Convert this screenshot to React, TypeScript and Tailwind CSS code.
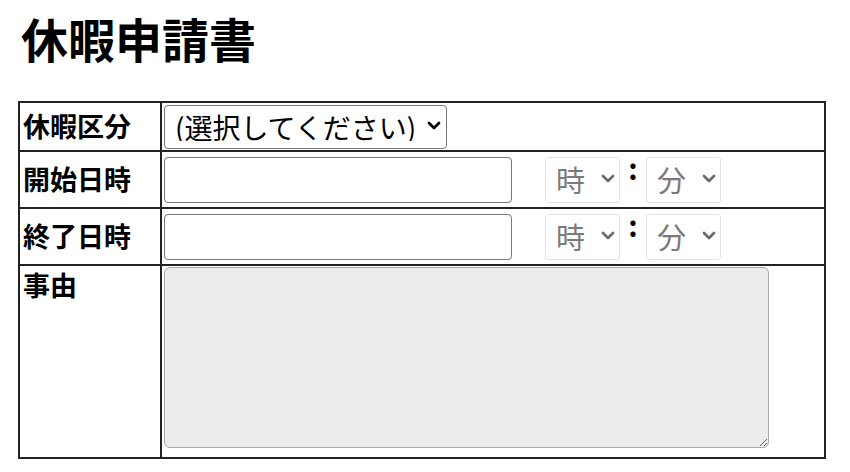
// 休暇申請書 — a plain application form laid out as a bordered table.
const JP = "font-['Noto_Sans_CJK_JP','Noto_Sans',sans-serif]"

function Caret({ className }: { className: string }) {
  return (
    <svg
      width="14"
      height="9"
      viewBox="0 0 14 9"
      fill="none"
      stroke="currentColor"
      strokeWidth="2.7"
      strokeLinecap="round"
      strokeLinejoin="round"
      className={`pointer-events-none absolute ${className}`}
    >
      <polyline points="2,2 7,7 12,2" />
    </svg>
  )
}

function TimeSelect({ label }: { label: string }) {
  return (
    <div className="relative h-[46px] w-[75px]">
      <select
        disabled
        className={`h-full w-full appearance-none rounded-[3px] border border-[#e3e3e3] bg-white pl-[10px] text-[29px] leading-none text-[#7a7a7a] ${JP}`}
      >
        <option>{label}</option>
      </select>
      <Caret className="right-[5px] top-[17px] text-[#6a6a6a]" />
    </div>
  )
}

function DateTimeRow({ label }: { label: string }) {
  return (
    <tr className="h-[57px]">
      <th className="border-2 border-[#222] px-[3px] text-left align-middle text-[27px] font-bold">
        {label}
      </th>
      <td className="border-2 border-[#222] px-[2px] align-middle">
        <div className="flex items-start">
          <input
            type="text"
            className="h-[46px] w-[348px] rounded-[4px] border border-[#767676] bg-white"
          />
          <div className="ml-[33px] flex items-start">
            <TimeSelect label="時" />
            <span className="-mt-[4px] w-[26px] text-center text-[29px] font-bold leading-none">:</span>
            <TimeSelect label="分" />
          </div>
        </div>
      </td>
    </tr>
  )
}

export default function App() {
  return (
    <div className={`min-h-[472px] bg-white px-[18px] pt-[14px] text-black ${JP}`}>
      <h1 className="pl-[3px] text-[47px] font-bold leading-none">休暇申請書</h1>

      <table className="mt-[40px] w-[808px] table-fixed border-collapse border-2 border-[#222]">
        <colgroup>
          <col className="w-[142px]" />
          <col />
        </colgroup>
        <tbody>
          <tr className="h-[48px]">
            <th className="border-2 border-[#222] px-[3px] text-left align-middle text-[27px] font-bold">
              休暇区分
            </th>
            <td className="border-2 border-[#222] px-[2px] pt-[2px] pb-[1px] align-middle">
              <div className="relative h-[44px] w-[283px]">
                <select
                  className={`h-full w-full appearance-none rounded-[4px] border border-[#767676] bg-white pl-[10px] text-[28px] leading-none text-black ${JP}`}
                >
                  <option>(選択してください)</option>
                </select>
                <Caret className="right-[6px] top-[16px] text-black" />
              </div>
            </td>
          </tr>

          <DateTimeRow label="開始日時" />
          <DateTimeRow label="終了日時" />

          <tr className="h-[193px]">
            <th className="border-2 border-[#222] px-[3px] pt-[2px] text-left align-top text-[27px] font-bold leading-tight">
              事由
            </th>
            <td className="border-2 border-[#222] px-[2px] pt-[1px] align-top">
              <textarea
                readOnly
                className="block h-[181px] w-[605px] rounded-[6px] border-[1.5px] border-[#a8a8a8] bg-[#ececec]"
              />
            </td>
          </tr>
        </tbody>
      </table>
    </div>
  )
}
